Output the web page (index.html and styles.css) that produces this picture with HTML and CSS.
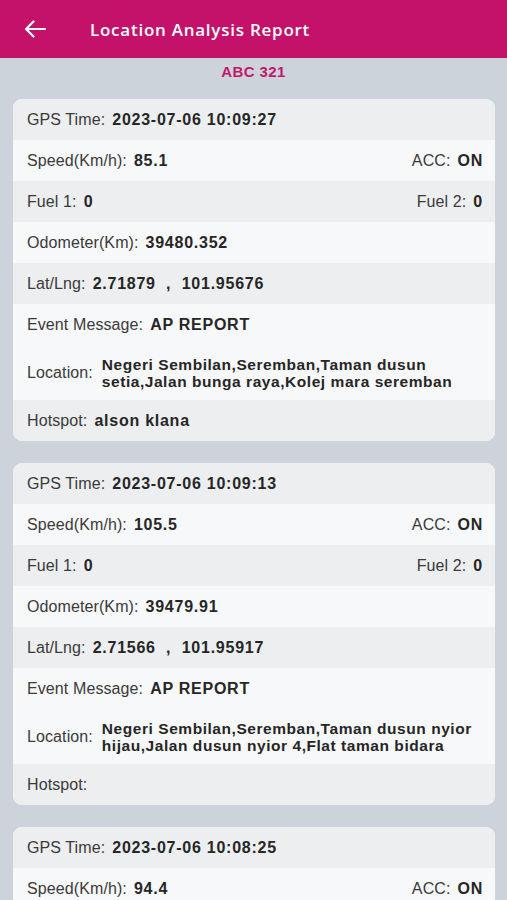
FILE: index.html
```html
<!DOCTYPE html>
<html>
<head>
<meta charset="utf-8">
<link rel="stylesheet" href="styles.css">
</head>
<body>
<header class="appbar">
  <svg class="back" width="22" height="18" viewBox="0 0 22 18"><path d="M21 9H2M9.5 1.5L2 9l7.5 7.5" fill="none" stroke="#fff" stroke-width="2.2" stroke-linecap="round" stroke-linejoin="round"/></svg>
  <h1 class="title">Location Analysis Report</h1>
</header>
<div class="plate">ABC 321</div>
<main class="list">
  <section class="card">
    <div class="row alt"><span class="lbl">GPS Time:</span><b class="val">2023-07-06 10:09:27</b></div>
    <div class="row split"><span><span class="lbl">Speed(Km/h):</span><b class="val">85.1</b></span><span><span class="lbl">ACC:</span><b class="val">ON</b></span></div>
    <div class="row alt split"><span><span class="lbl">Fuel 1:</span><b class="val">0</b></span><span><span class="lbl">Fuel 2:</span><b class="val">0</b></span></div>
    <div class="row"><span class="lbl">Odometer(Km):</span><b class="val">39480.352</b></div>
    <div class="row alt"><span class="lbl">Lat/Lng:</span><b class="val">2.71879 &nbsp;, &nbsp;101.95676</b></div>
    <div class="row"><span class="lbl">Event Message:</span><b class="val">AP REPORT</b></div>
    <div class="row loc"><span class="lbl">Location:</span><b class="val">Negeri Sembilan,Seremban,Taman dusun setia,Jalan bunga raya,Kolej mara seremban</b></div>
    <div class="row alt"><span class="lbl">Hotspot:</span><b class="val">alson klana</b></div>
  </section>
  <section class="card">
    <div class="row alt"><span class="lbl">GPS Time:</span><b class="val">2023-07-06 10:09:13</b></div>
    <div class="row split"><span><span class="lbl">Speed(Km/h):</span><b class="val">105.5</b></span><span><span class="lbl">ACC:</span><b class="val">ON</b></span></div>
    <div class="row alt split"><span><span class="lbl">Fuel 1:</span><b class="val">0</b></span><span><span class="lbl">Fuel 2:</span><b class="val">0</b></span></div>
    <div class="row"><span class="lbl">Odometer(Km):</span><b class="val">39479.91</b></div>
    <div class="row alt"><span class="lbl">Lat/Lng:</span><b class="val">2.71566 &nbsp;, &nbsp;101.95917</b></div>
    <div class="row"><span class="lbl">Event Message:</span><b class="val">AP REPORT</b></div>
    <div class="row loc"><span class="lbl">Location:</span><b class="val">Negeri Sembilan,Seremban,Taman dusun nyior hijau,Jalan dusun nyior 4,Flat taman bidara</b></div>
    <div class="row alt"><span class="lbl">Hotspot:</span><b class="val"></b></div>
  </section>
  <section class="card">
    <div class="row alt"><span class="lbl">GPS Time:</span><b class="val">2023-07-06 10:08:25</b></div>
    <div class="row split"><span><span class="lbl">Speed(Km/h):</span><b class="val">94.4</b></span><span><span class="lbl">ACC:</span><b class="val">ON</b></span></div>
  </section>
</main>
</body>
</html>
```
FILE: styles.css
```css
* { box-sizing: border-box; margin: 0; padding: 0; }
html, body { width: 507px; height: 900px; overflow: hidden; }
body { background: #cdd3da; font-family: "Liberation Sans", Arial, sans-serif; color: #333; }
.appbar { height: 58px; background: #c4116a; display: flex; align-items: center; padding-left: 24px; }
.back { display: block; margin-right: 44px; }
.title { font-family: "Open Sans", sans-serif; font-weight: 600; font-size: 17px; color: #fff; letter-spacing: 0.75px; }
.plate { height: 41px; padding-top: 6px; text-align: center; color: #c2186b; font-weight: bold; font-size: 15px; line-height: 16px; letter-spacing: 0.4px; }
.list { display: flex; flex-direction: column; gap: 22px; padding: 0 12px 0 13px; }
.card { border-radius: 9px; overflow: hidden; background: #f7f8f9; }
.row { height: 41px; display: flex; align-items: center; padding: 0 12px 0 14px; background: #f7f8f9; font-size: 16px; }
.row.alt { background: #eceef0; }
.row.split { justify-content: space-between; }
.lbl { color: #3a3a3a; margin-right: 7px; white-space: nowrap; letter-spacing: 0.1px; }
.val { color: #262626; font-weight: bold; letter-spacing: 0.75px; }
.row.loc { height: 55px; }
.row.loc .lbl { margin-right: 9px; }
.row.loc .val { font-size: 15.5px; line-height: 17px; letter-spacing: 0.55px; }
```
